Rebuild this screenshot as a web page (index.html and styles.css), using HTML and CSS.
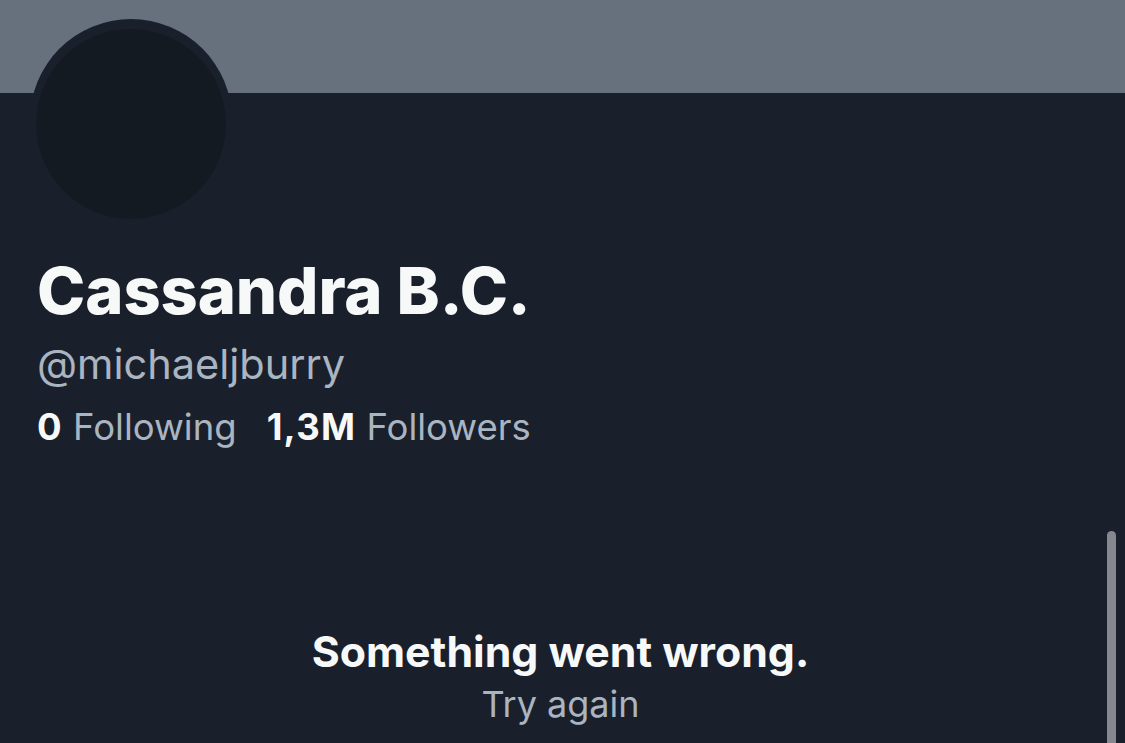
FILE: index.html
```html
<!DOCTYPE html>
<html lang="en">
<head>
<meta charset="utf-8">
<title>Cassandra B.C. (@michaeljburry)</title>
<link rel="stylesheet" href="styles.css">
</head>
<body>
<div class="page">
  <div class="banner"></div>
  <div class="profile">
    <div class="avatar-ring"><div class="avatar"></div></div>
    <h1 class="name">Cassandra B.C.</h1>
    <div class="handle">@michaeljburry</div>
    <div class="stats">
      <span class="stat"><b>0</b> Following</span>
      <span class="stat"><b>1,3M</b> Followers</span>
    </div>
  </div>
  <div class="error">
    <div class="error-title">Something went wrong.</div>
    <div class="error-retry">Try again</div>
  </div>
  <div class="scrollbar"></div>
</div>
</body>
</html>
```

FILE: styles.css
```css
html, body {
  margin: 0;
  padding: 0;
  background: #1a202b;
}
body {
  font-family: Inter, "Noto Sans", "Liberation Sans", sans-serif;
  color: #f7f9f9;
  width: 1125px;
  height: 743px;
  overflow: hidden;
}
.page {
  position: relative;
  height: 743px;
}
.banner {
  height: 93px;
  background: #67717e;
}
.profile {
  padding-left: 37px;
}
.avatar-ring {
  margin-top: -74px;
  margin-left: -7px;
  width: 202px;
  height: 202px;
  border-radius: 50%;
  background: #1a202b;
  display: flex;
  align-items: center;
  justify-content: center;
}
.avatar {
  width: 190px;
  height: 190px;
  border-radius: 50%;
  background: #141a22;
  margin-top: 8px;
}
.name {
  margin: 30px 0 0;
  font-size: 65px;
  font-weight: 800;
  line-height: 80px;
  letter-spacing: -0.1px;
}
.handle {
  margin-top: 4px;
  font-size: 41.5px;
  line-height: 58px;
  color: #aab5c2;
}
.stats {
  display: flex;
  gap: 30px;
  margin-top: 6px;
  font-size: 36.5px;
  line-height: 56px;
  color: #aab5c2;
}
.stat b {
  color: #f7f9f9;
  font-weight: 700;
  letter-spacing: 1.2px;
}
.error {
  margin-top: 171px;
  text-align: center;
  padding-right: 4px;
}
.error-title {
  font-size: 42.8px;
  font-weight: 700;
  line-height: 52px;
}
.error-retry {
  font-size: 36px;
  line-height: 52px;
  color: #aab5c2;
}
.scrollbar {
  position: absolute;
  left: 1107px;
  top: 531px;
  width: 9px;
  height: 230px;
  border-radius: 5px;
  background: #85898f;
}
```
